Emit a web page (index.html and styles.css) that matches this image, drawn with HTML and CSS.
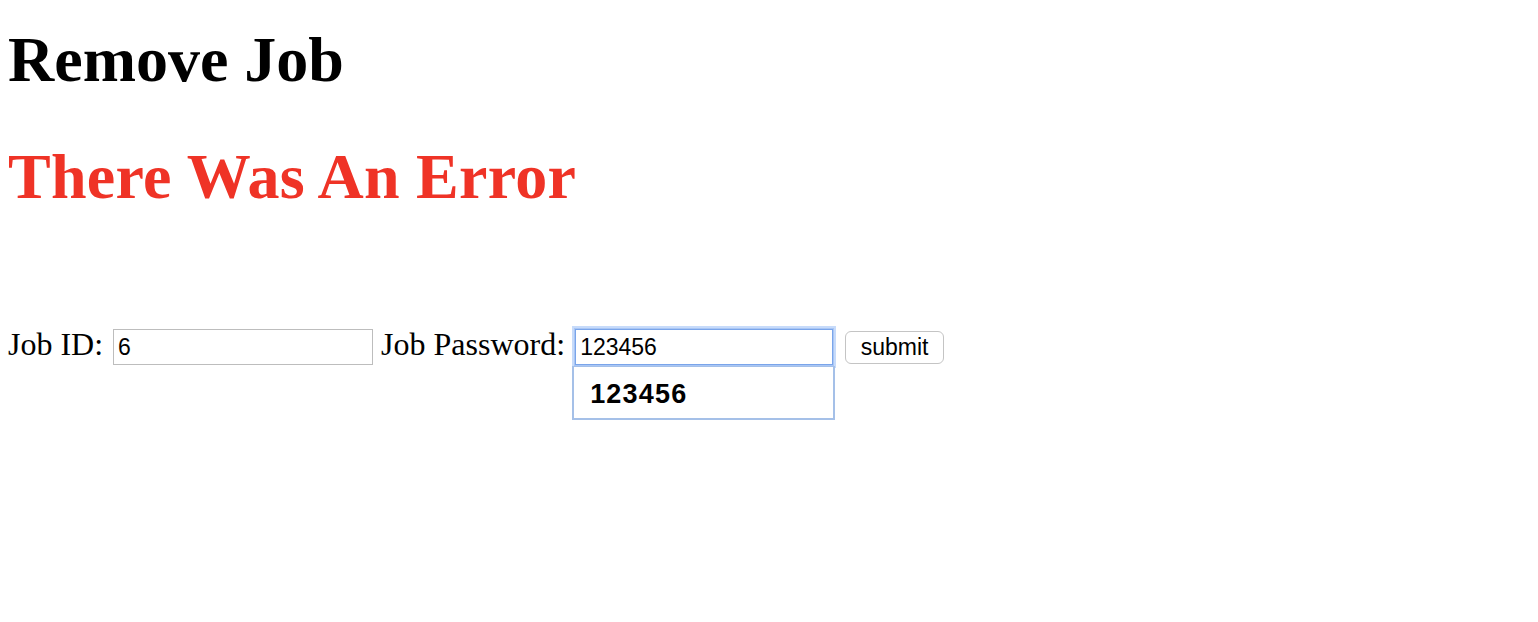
FILE: index.html
```html
<!DOCTYPE html>
<html>
<head>
<meta charset="utf-8">
<title>Remove Job</title>
<link rel="stylesheet" href="styles.css">
</head>
<body>
<h1 class="title">Remove Job</h1>
<h1 class="title error">There Was An Error</h1>
<form class="job-form">
  <label class="label lbl-id" for="jobid">Job ID:</label>
  <input class="field field-id" id="jobid" type="text" value="6">
  <label class="label lbl-pw" for="jobpw">Job Password:</label>
  <div class="pw-wrap">
    <input class="field field-pw" id="jobpw" type="text" value="123456">
    <div class="pw-popup"><span class="pw-option">123456</span></div>
  </div>
  <button class="submit" type="button">submit</button>
</form>
</body>
</html>
```
FILE: styles.css
```css
html, body {
  margin: 0;
  padding: 0;
  background: #ffffff;
}
body {
  padding: 0 8px;
  font-family: "Liberation Serif", "Times New Roman", serif;
  color: #000;
}
.title {
  font-size: 64px;
  font-weight: bold;
  margin: 0 0 43px 0;
  line-height: normal;
}
.title:first-child {
  padding-top: 23px;
}
.error {
  color: #ef3326;
  margin-bottom: 0;
  letter-spacing: 0.25px;
}
.job-form {
  display: flex;
  align-items: flex-start;
  margin: 112px 0 0 0;
}
.label {
  font-size: 32px;
  line-height: normal;
}
.field {
  box-sizing: border-box;
  width: 260px;
  height: 36px;
  margin: 3px 0 0 0;
  padding: 0 4px;
  border: 1px solid #bdbdbd;
  border-radius: 0;
  font-family: "Liberation Sans", Arial, sans-serif;
  font-size: 23px;
  color: #000;
  background: #fff;
  outline: none;
}
.field-id {
  margin-left: 10px;
  margin-right: 8px;
}
.pw-wrap {
  margin-left: 10px;
  display: flex;
  flex-direction: column;
  align-items: flex-start;
}
.field-pw {
  width: 258px;
  border-color: #7aa5ea;
  box-shadow: 0 0 0 1px #a9c6f5, 0 0 0 3px #c7dbfa;
}
.pw-popup {
  box-sizing: border-box;
  width: 263px;
  height: 54px;
  margin: 1px -2px 0 -3px;
  border: 2px solid #a5c0e8;
  border-top-width: 1px;
  background: #ffffff;
  display: flex;
  align-items: center;
  padding: 4px 0 0 16px;
}
.pw-option {
  font-family: "Liberation Sans", Arial, sans-serif;
  font-weight: bold;
  font-size: 27px;
  letter-spacing: 1.2px;
  color: #000;
}
.submit {
  box-sizing: border-box;
  width: 99px;
  height: 33px;
  margin: 5px 0 0 12px;
  padding: 0;
  border: 1px solid #c4c4c4;
  border-radius: 6px;
  background: #fff;
  font-family: "Liberation Sans", Arial, sans-serif;
  font-size: 23px;
  color: #000;
}
```
